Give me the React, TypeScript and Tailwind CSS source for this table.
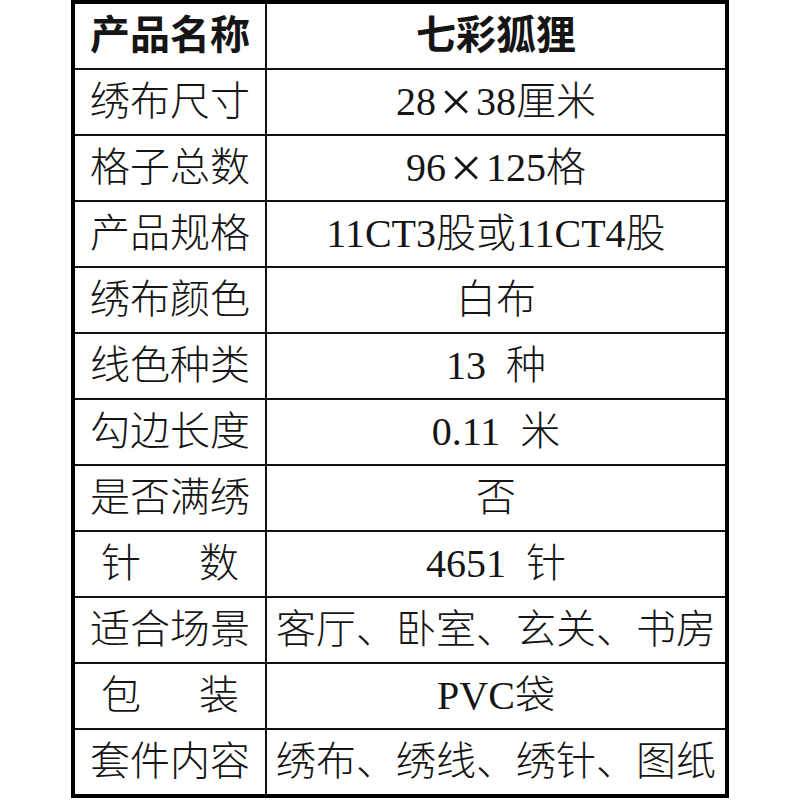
const rows: { label: string; value: React.ReactNode; spread?: boolean }[] = [
  { label: "绣布尺寸", value: <>28<X />38厘米</> },
  { label: "格子总数", value: <>96<X />125格</> },
  { label: "产品规格", value: "11CT3股或11CT4股" },
  { label: "绣布颜色", value: "白布" },
  { label: "线色种类", value: "13\u00a0\u00a0种" },
  { label: "勾边长度", value: "0.11\u00a0\u00a0米" },
  { label: "是否满绣", value: "否" },
  { label: "针数", value: "4651\u00a0\u00a0针", spread: true },
  { label: "适合场景", value: "客厅、卧室、玄关、书房" },
  { label: "包装", value: "PVC袋", spread: true },
  { label: "套件内容", value: "绣布、绣线、绣针、图纸" },
];

function X() {
  return <span className="inline-block w-[40px] text-center text-[58px] font-thin">×</span>;
}

const serif = { fontFamily: '"Liberation Serif", "Noto Sans CJK SC", serif' };

export default function App() {
  return (
    <div className="min-h-[800px] bg-white">
      <div
        className="ml-[71px] grid w-[658px] grid-cols-[190px_458px] gap-[2px] border-4 border-black bg-[#111] text-[40px] leading-none text-[#151515]"
        style={serif}
      >
        <div className="flex h-[64px] items-center justify-center bg-white font-bold">产品名称</div>
        <div className="flex h-[64px] items-center justify-center bg-white font-bold">七彩狐狸</div>
        {rows.map((r) => (
          <div key={r.label} className="contents">
            {r.spread ? (
              <div className="flex h-[64px] items-center justify-between bg-white px-[26px] font-light">
                {r.label.split("").map((c) => (
                  <span key={c}>{c}</span>
                ))}
              </div>
            ) : (
              <div className="flex h-[64px] items-center justify-center bg-white font-light">{r.label}</div>
            )}
            <div className="flex h-[64px] items-center justify-center whitespace-nowrap bg-white font-light">
              {r.value}
            </div>
          </div>
        ))}
      </div>
    </div>
  );
}
